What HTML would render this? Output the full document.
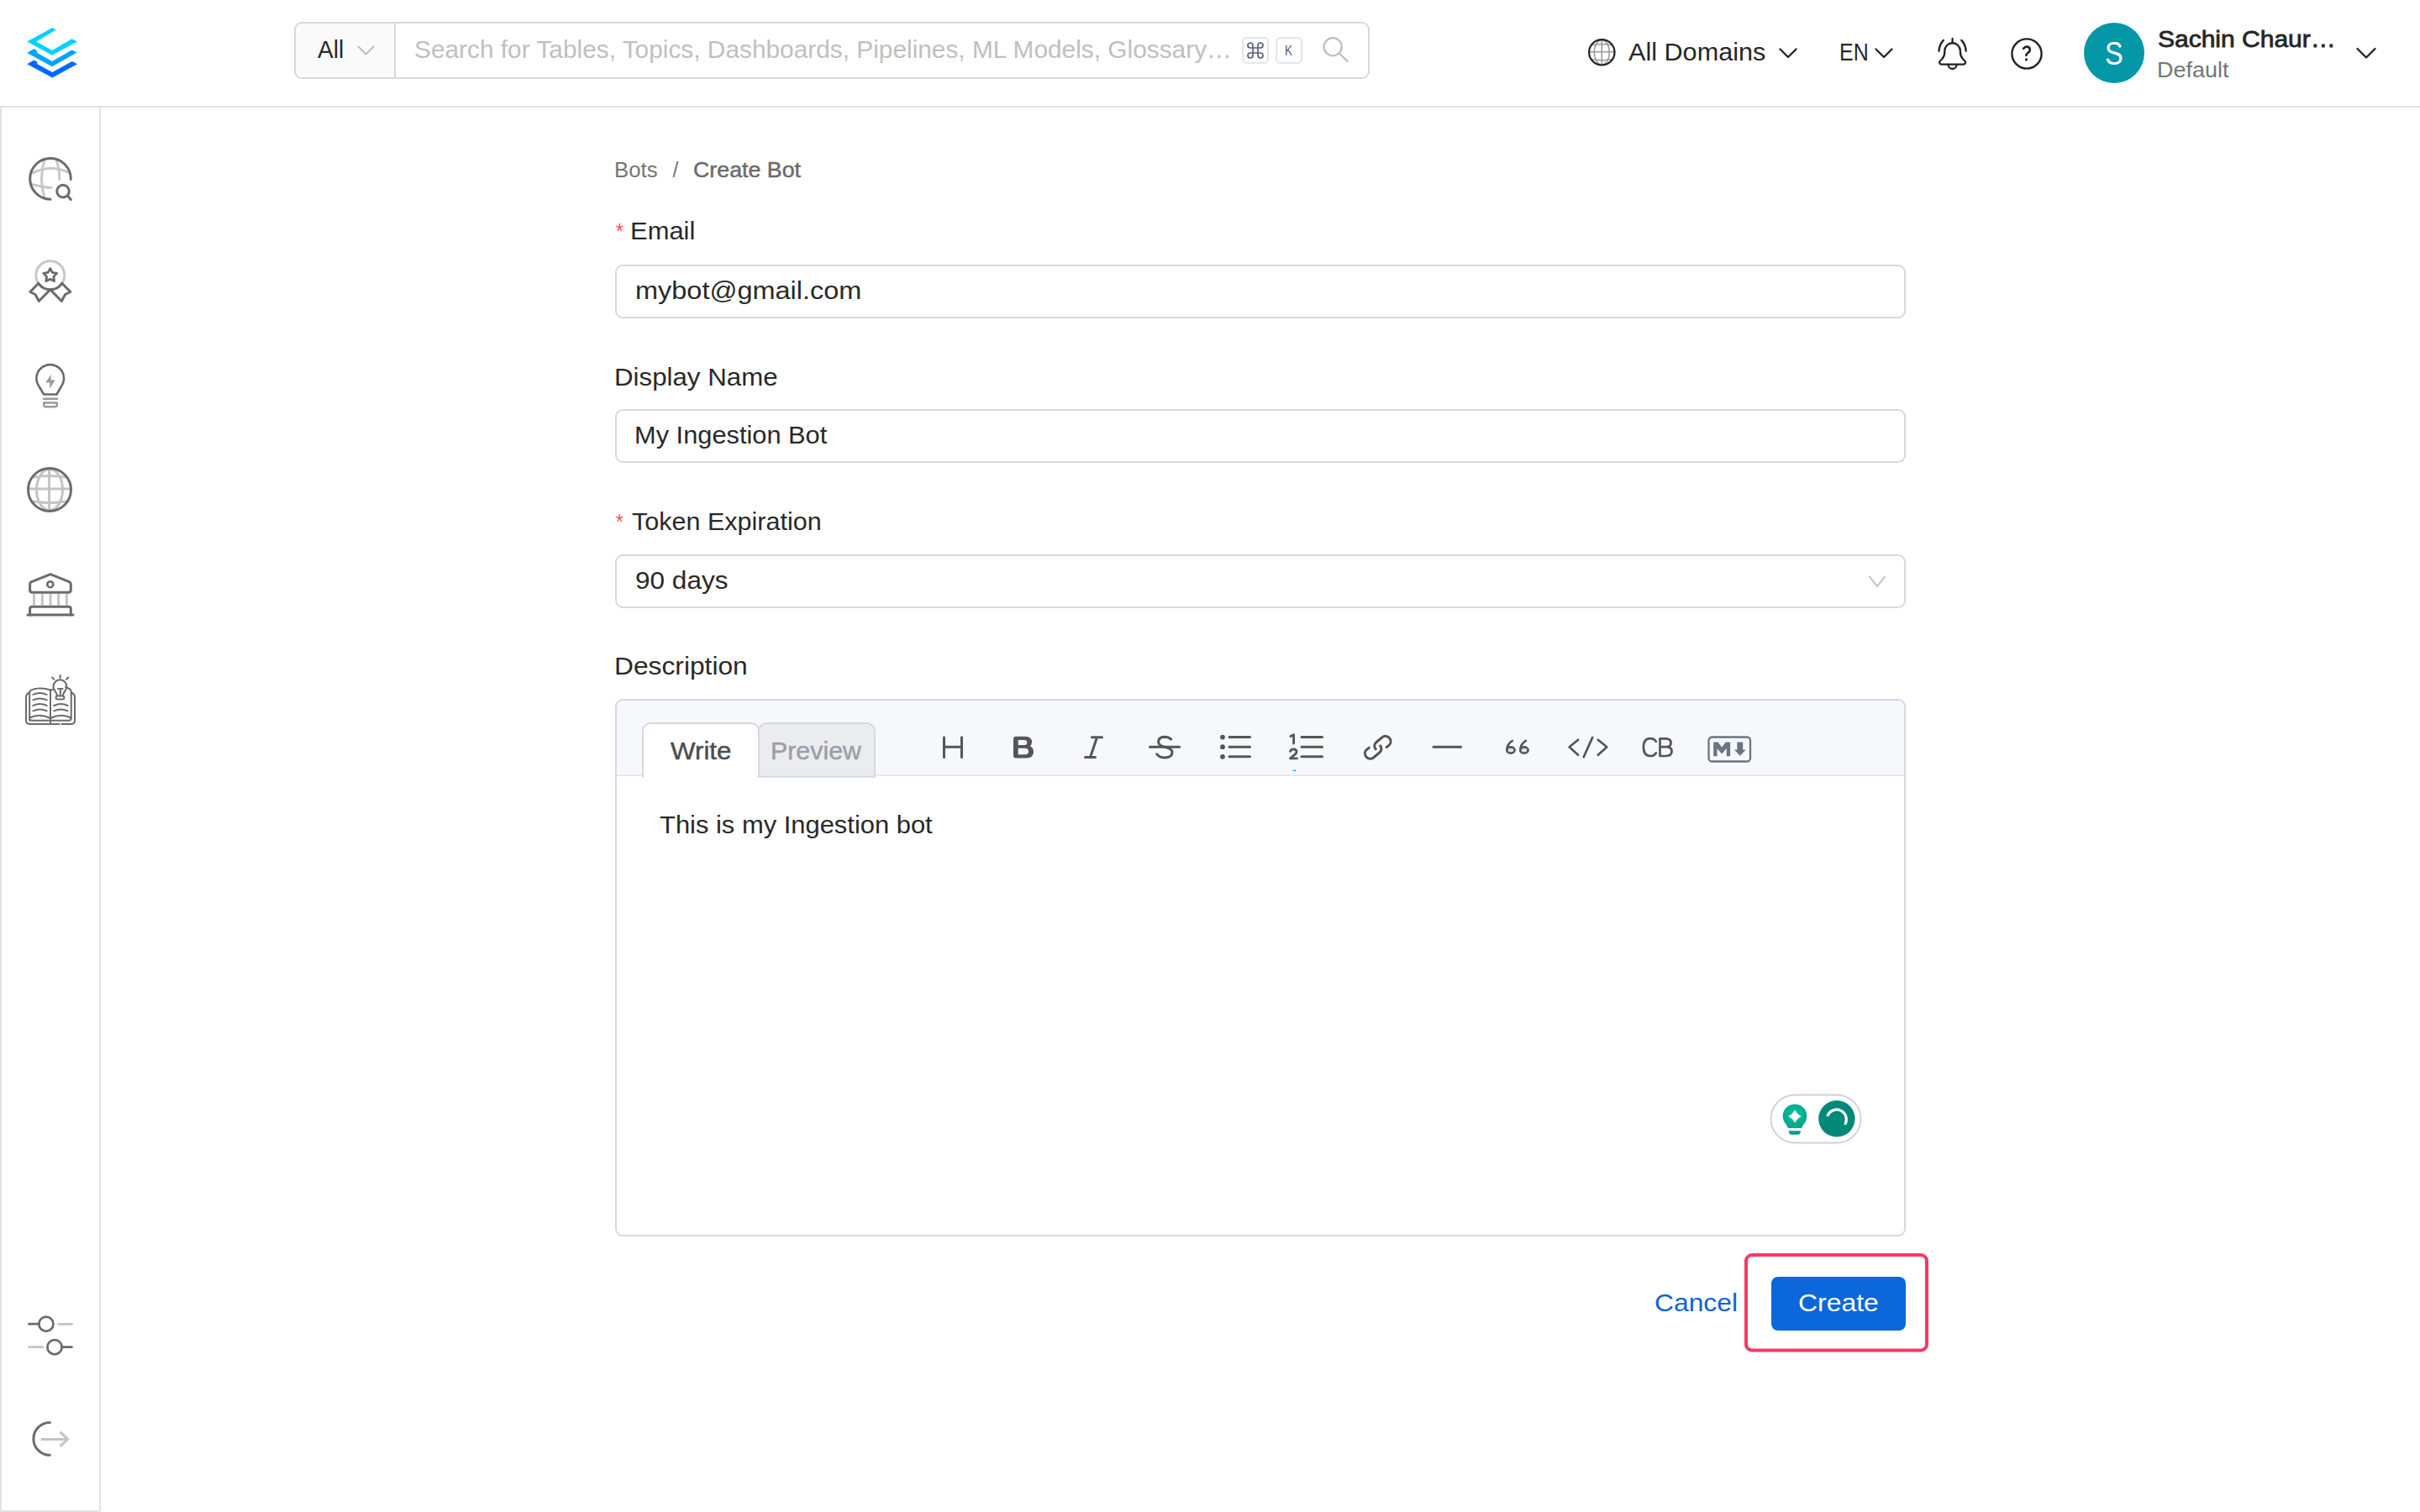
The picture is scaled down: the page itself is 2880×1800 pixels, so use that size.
<!DOCTYPE html>
<html><head><meta charset="utf-8"><title>Create Bot</title>
<style>
html,body{margin:0;padding:0;background:#fff;width:2880px;height:1800px;overflow:hidden}
body{position:relative;font-family:"Liberation Sans",sans-serif}
svg.bg{position:absolute;left:0;top:0}
.t{position:absolute;white-space:pre;transform-origin:0 0;font-family:"Liberation Sans",sans-serif}
</style></head><body>
<svg class="bg" width="2880" height="1800" viewBox="0 0 2880 1800" fill="none" stroke-linecap="round" stroke-linejoin="round">
<!-- header line -->
<rect x="0" y="126" width="2880" height="2" fill="#e2e2e2" stroke="none"/>
<!-- sidebar -->
<rect x="1" y="127" width="118" height="1672" stroke="#e2e2e2" stroke-width="2"/>
<!-- logo -->
<g stroke="none">
<polygon fill="#00d2ff" points="62.3,33.1 66.7,35.5 43.2,49.5 62,59.9 85.5,46.2 92,49.5 62,65.8 32.2,49.5"/>
<polygon fill="#00a3ff" points="40.5,58.1 44.7,60.8 43.5,62.6 62,73 85.5,59.6 91.7,62.6 62,79.2 32.2,62.9"/>
<polygon fill="#0068ff" points="40.5,71.5 45,74.2 43.5,75.7 62.3,86 85.8,73 92,76.2 62.3,92.6 32.2,76.2"/>
</g>
<!-- search box -->
<path d="M359,27 H470 V93 H359 A8,8 0 0 1 351,85 V35 A8,8 0 0 1 359,27 Z" fill="#fafafa" stroke="none"/>
<rect x="351" y="27" width="1278" height="66" rx="8" stroke="#d9d9d9" stroke-width="2"/>
<rect x="469" y="27" width="2" height="66" fill="#d9d9d9" stroke="none"/>
<polyline points="426,55 435.5,64.5 445,55" stroke="#bfbfbf" stroke-width="2" stroke-linecap="butt" stroke-linejoin="miter"/>
<rect x="1479.2" y="45.2" width="29.7" height="29.7" rx="4" stroke="#dde3ec" stroke-width="1.8"/>
<rect x="1519.2" y="45.2" width="29.7" height="29.7" rx="4" stroke="#dde3ec" stroke-width="1.8"/>
<!-- command symbol -->
<path d="M1491,57 V54 A3,3 0 1 0 1488,57 H1500 A3,3 0 1 0 1497,54 V66 A3,3 0 1 0 1500,63 H1488 A3,3 0 1 0 1491,66 Z" stroke="#5a6275" stroke-width="1.7"/>
<!-- search icon -->
<circle cx="1586.2" cy="55.8" r="10.6" stroke="#bfbfbf" stroke-width="2.3"/>
<line x1="1594.3" y1="64" x2="1603.6" y2="73" stroke="#bfbfbf" stroke-width="2.3"/>
<!-- header globe -->
<g stroke-width="1.6" stroke="#9a9a9a">
<line x1="1906.3" y1="47.5" x2="1906.3" y2="77"/>
<line x1="1891.5" y1="61.8" x2="1921" y2="61.8"/>
<path d="M1895,53.5 Q1906.3,51.5 1917.5,53.5"/>
<path d="M1895,70.8 Q1906.3,72.8 1917.5,70.8"/>
<ellipse cx="1906.3" cy="62.3" rx="9.1" ry="14.5"/>
</g>
<circle cx="1906.3" cy="62.3" r="15.2" stroke="#222" stroke-width="2.2"/>
<!-- chevrons -->
<polyline points="2118.5,58.5 2128,68 2137.5,58.5" stroke="#262626" stroke-width="2.4"/>
<polyline points="2232.5,58.5 2242,68 2251.5,58.5" stroke="#262626" stroke-width="2.4"/>
<polyline points="2805.5,58 2816,68.5 2826.5,58" stroke="#262626" stroke-width="2.4"/>
<!-- bell -->
<g stroke="#222" stroke-width="2.3">
<line x1="2323.6" y1="46" x2="2323.6" y2="50.8"/>
<path d="M2310.8,76.6 H2336.4 Q2339.8,76.4 2338.8,73.2 Q2338,71.8 2336,70.3 Q2333,67 2332.9,62 V60.5 A9.3,9.3 0 0 0 2314.3,60.5 V62 Q2314.2,67 2311.2,70.3 Q2309.2,71.8 2308.4,73.2 Q2307.4,76.4 2310.8,76.6 Z"/>
<path d="M2318.6,77 A5,5 0 0 0 2328.6,77"/>
<path d="M2312.9,47.9 Q2308,53 2307.5,60.8"/>
<path d="M2334.3,47.9 Q2339.2,53 2339.7,60.8"/>
</g>
<!-- help -->
<circle cx="2412" cy="64" r="17.6" stroke="#222" stroke-width="2.4"/>
<path d="M2408.1,57.9 Q2409.5,55.5 2412,55.6 Q2415.6,55.7 2415.8,58.8 Q2416,61.2 2413.6,62.7 Q2411.4,64.2 2411.4,66" stroke="#222" stroke-width="2.6"/>
<circle cx="2411.5" cy="70.9" r="1.6" fill="#222" stroke="none"/>
<!-- avatar -->
<circle cx="2516" cy="63" r="36" fill="#0497a8" stroke="none"/>

<!-- sidebar icons -->
<g stroke-width="3">
 <!-- explore -->
 <g stroke="#c8c8c8">
  <path d="M38.6,205.8 Q59.7,195.5 81.5,205"/>
  <path d="M38.6,219.8 Q49,222.5 60.6,223.6"/>
  <path d="M52.5,191.4 Q46.5,213 52.5,233.8"/>
  <path d="M67.4,191.4 Q71,203 70.8,213.4"/>
 </g>
 <path d="M84.3,213.4 A24.3,24.3 0 1 0 60,237.2" stroke="#6b6b6b"/>
 <circle cx="75" cy="227.6" r="7.3" stroke="#6b6b6b"/>
 <line x1="80.8" y1="233.6" x2="84.3" y2="237.6" stroke="#6b6b6b"/>
 <!-- medal -->
 <path d="M45.8,337.3 A17,17 0 1 1 73.8,337.3" stroke="#c8c8c8"/>
 <path d="M45.8,337.3 A17,17 0 0 0 73.8,337.3" stroke="#6b6b6b"/>
 <path d="M59.70,319.60 L62.29,324.34 L67.59,325.34 L63.88,329.26 L64.58,334.61 L59.70,332.30 L54.82,334.61 L55.52,329.26 L51.81,325.34 L57.11,324.34 Z" stroke="#6b6b6b" stroke-width="2.8"/>
 <path d="M45.8,337.3 L35.8,347.5 L42,350.5 L46.3,358.5 L59.3,345.3" stroke="#6b6b6b"/>
 <path d="M73.8,337.3 L83.8,347.5 L77.6,350.5 L73.3,358.5 L60.3,345.3" stroke="#6b6b6b"/>
 <!-- bulb -->
 <path d="M52.1,469.5 L46.5,460 A16.3,16.3 0 1 1 72.9,460 L67.5,469.5 Z" stroke="#6b6b6b" stroke-width="2.6"/>
 <polygon points="60.8,445.8 54.2,455.5 59.3,455.5 59.1,462.7 65.7,452.5 60.6,452.5" fill="#9a9a9a" stroke="none"/>
 <line x1="52" y1="474.8" x2="68" y2="474.8" stroke="#9a9a9a" stroke-width="2.6"/>
 <path d="M52.2,479.5 H67.8 V482 Q67.8,484.3 65.5,484.3 H54.5 Q52.2,484.3 52.2,482 Z" stroke="#9a9a9a" stroke-width="2.4"/>
 <!-- domain globe -->
 <g stroke="#c4c4c4">
  <line x1="58.6" y1="558.5" x2="58.6" y2="607.5"/>
  <line x1="34.5" y1="582" x2="83.5" y2="582"/>
  <path d="M40,568 Q59,565 78,568"/>
  <path d="M40,597 Q59,600 78,597"/>
  <ellipse cx="59" cy="583" rx="15.5" ry="24.5"/>
 </g>
 <circle cx="59" cy="583" r="25.5" stroke="#6b6b6b"/>
 <!-- bank -->
 <path d="M38.5,705.2 H81.4 Q84.3,705.2 84.3,702.3 V695.4 Q84.3,693.4 82.4,692.6 L60,683.6 L37.6,692.6 Q35.6,693.4 35.6,695.4 V702.3 Q35.6,705.2 38.5,705.2 Z" stroke="#6b6b6b"/>
 <circle cx="59.8" cy="695.7" r="3.5" stroke="#6b6b6b" stroke-width="2.6"/>
 <g stroke="#c4c4c4" stroke-linecap="butt"><line x1="40.5" y1="707" x2="40.5" y2="720.5"/><line x1="50.3" y1="707" x2="50.3" y2="720.5"/><line x1="60" y1="707" x2="60" y2="720.5"/><line x1="69.6" y1="707" x2="69.6" y2="720.5"/><line x1="79.4" y1="707" x2="79.4" y2="720.5"/></g>
 <path d="M35.6,732 V724.8 Q35.6,722.3 38.1,722.3 H81.8 Q84.3,722.3 84.3,724.8 V732" stroke="#6b6b6b"/>
 <line x1="33" y1="732" x2="87" y2="732" stroke="#6b6b6b"/>
 <!-- settings -->
 <g stroke-width="2.7">
 <circle cx="54.9" cy="1576.2" r="8.6" stroke="#6b6b6b"/>
 <line x1="34.5" y1="1576.2" x2="46.5" y2="1576.2" stroke="#6b6b6b"/>
 <line x1="69.8" y1="1576.4" x2="85.5" y2="1576.4" stroke="#c4c4c4"/>
 <circle cx="65" cy="1603.7" r="8.6" stroke="#6b6b6b"/>
 <line x1="34.5" y1="1603.7" x2="50.8" y2="1603.7" stroke="#c4c4c4"/>
 <line x1="73.5" y1="1603.7" x2="85.5" y2="1603.7" stroke="#6b6b6b"/>
 </g>
 <!-- logout -->
 <path d="M59.3,1693.5 A19.4,19.4 0 0 0 59.3,1732.3" stroke="#6b6b6b"/>
 <g stroke="#c4c4c4" stroke-linecap="butt" stroke-linejoin="miter"><line x1="48.7" y1="1713.6" x2="80.5" y2="1713.4"/><polyline points="71.6,1704.6 80.6,1713.3 71.6,1721.8"/></g>
</g>
<!-- book icon -->
<g stroke="#6b6b6b" stroke-width="2">
 <path d="M35.2,824.5 Q31,826 31,830 V857.8 Q31,861.9 35,861.9 H70.5 M73.5,861.9 H85 Q89,861.9 89,857.8 V830 Q89,826 84.7,824.5"/>
 <path d="M35.2,857.8 V823.5 Q36,821 44,819.8 M46,819.6 Q53,819 60,821.5 Q62.5,820.8 64.5,820.8 M78,818 Q84.7,820 84.7,823 V855 Q84.7,857.8 82,857.8 H38 Q35.2,857.8 35.2,855"/>
 <line x1="60" y1="821.5" x2="60" y2="861.9"/>
 <path d="M35.2,854.5 Q47,849 60,855 Q73,849 84.7,854.5"/>
 <path d="M39.3,826.8 Q47.5,823 55.7,826.8 M39.3,833.4 Q47.5,829.6 55.7,833.4 M39.3,840 Q47.5,836.2 55.7,840 M39.3,846.3 Q47.5,842.5 55.7,846.3 M64.2,840 Q72.4,836.2 80.6,840 M64.2,846.3 Q72.4,842.5 80.6,846.3"/>
 <path d="M68,827.5 L65.5,822.5 A7.9,7.9 0 1 1 77.3,822.5 L74.8,827.5" />
 <rect x="66.5" y="828.6" width="9.9" height="4" rx="2"/>
 <path d="M69,820 H74.6 M71.8,820 V827.5"/>
 <path d="M71.6,804 V807 M62.2,806.5 L64.2,808.7 M81.3,806.5 L79.1,808.7"/>
</g>

<!-- form inputs -->
<rect x="733" y="316" width="1534" height="62" rx="8" stroke="#d9d9d9" stroke-width="2" fill="#fff"/>
<rect x="733" y="488" width="1534" height="62" rx="8" stroke="#d9d9d9" stroke-width="2" fill="#fff"/>
<rect x="733" y="661" width="1534" height="62" rx="8" stroke="#d9d9d9" stroke-width="2" fill="#fff"/>
<polyline points="2224.5,686 2234,698 2243.5,686" stroke="#bfbfbf" stroke-width="1.9" stroke-linecap="butt" stroke-linejoin="miter"/>

<!-- editor -->
<path d="M733,924 V841 A8,8 0 0 1 741,833 H2259 A8,8 0 0 1 2267,841 V924 Z" fill="#f7f8fb" stroke="none"/>
<rect x="733" y="833" width="1534" height="638" rx="8" stroke="#d5d8e3" stroke-width="2"/>
<rect x="734" y="922" width="1532" height="2" fill="#e6e8ef" stroke="none"/>
<path d="M903,924.8 V870 A9,9 0 0 1 912,861 H1032 A9,9 0 0 1 1041,870 V924.8 Z" fill="#ebecf0" stroke="#d5d8e3" stroke-width="2"/>
<path d="M765,925 V870 A9,9 0 0 1 774,861 H894 A9,9 0 0 1 903,870 V924" fill="#fff" stroke="#d5d8e3" stroke-width="2"/>
<rect x="766" y="921" width="136" height="6" fill="#fff" stroke="none"/>

<!-- toolbar icons -->
<g stroke="#555" stroke-width="3">
 <path d="M1123.5,877.7 V901.6 M1144.5,877.7 V901.6 M1123.5,889.3 H1144.5"/>
 <path d="M1209,876.7 H1220 Q1228,876.7 1228,883.5 Q1228,886.5 1226,888.2 Q1230,890.5 1230,895 Q1230,902.5 1221,902.5 H1209 Q1206,902.5 1206,899.5 V879.7 Q1206,876.7 1209,876.7 Z M1211.7,880.9 V887 H1219.5 Q1222.3,887 1222.3,884 Q1222.3,880.9 1219.5,880.9 Z M1211.7,890.8 V898.3 H1220 Q1224,898.3 1224,894.5 Q1224,890.8 1220,890.8 Z" fill="#555" stroke="none" fill-rule="evenodd"/>
 <path d="M1299.5,877.7 H1311.5 M1291.5,901.6 H1303.5 M1305.5,877.7 L1297.5,901.6"/>
 <path d="M1368.5,889.2 H1403.5"/>
 <path d="M1393.6,880 Q1390.5,877.3 1386,877.3 Q1378.6,877.5 1378.6,883.3 Q1378.8,887.5 1386,889.2 Q1395,891 1395,895.5 Q1395,901.9 1386,901.9 Q1380,901.9 1376.8,897.8"/>
 <circle cx="1455" cy="877.6" r="1.8" fill="#555" stroke-width="2.2"/>
 <circle cx="1455" cy="889.2" r="1.8" fill="#555" stroke-width="2.2"/>
 <circle cx="1455" cy="900.8" r="1.8" fill="#555" stroke-width="2.2"/>
 <path d="M1463,877.6 H1487.5 M1463,889.2 H1487.5 M1463,900.8 H1487.5"/>
 <path d="M1549,877.6 H1573.5 M1549,889.2 H1573.5 M1549,900.8 H1573.5"/>
 <path d="M1535.8,876.5 L1539.6,874.8 V885" stroke-width="2.8"/>
 <path d="M1535.5,894.5 Q1536.5,891.9 1539.5,891.9 Q1543,891.9 1543,895 Q1543,897 1540,899 L1535.5,902.8 H1543.5" stroke-width="2.8"/>
 <path d="M1629.3,890.1 L1626,892.8 A6.3,6.3 0 0 0 1634.5,902 L1642,895.6 A5.5,5.5 0 0 0 1642.6,887.8" />
 <path d="M1650,889.6 L1653.5,886.8 A6.3,6.3 0 0 0 1645,877.6 L1637.5,884 A5.5,5.5 0 0 0 1637.2,891.8" />
 <path d="M1706,889.2 H1738.5"/>
 <path d="M1870,890 L1878,881 M1868,889.3 L1878,898.8" stroke-width="0"/>
 <polyline points="1878.1,880.7 1867.6,889.3 1878.1,898.8" stroke-width="2.7"/>
 <line x1="1895.2" y1="877.9" x2="1884.7" y2="901.2" stroke-width="2.7"/>
 <polyline points="1901.8,880.7 1912.3,889.3 1901.8,898.8" stroke-width="2.7"/>
 <path d="M1970.8,882.8 Q1968.5,879.2 1964,879.2 Q1955.9,879.2 1955.9,889.6 Q1955.9,900 1964,900 Q1968.5,900 1970.8,896.4" stroke-width="2.7"/>
 <path d="M1975.5,879.4 H1982.5 Q1988.5,879.4 1988.5,884.6 Q1988.5,889.2 1983,889.2 H1975.5 M1983,889.2 Q1989.5,889.2 1989.5,894.6 Q1989.5,900 1982.5,900 H1975.5 V879.4" stroke-width="2.7" stroke-linejoin="round"/>
</g>
<!-- quote 66 -->
<g stroke="#555" stroke-width="2.6">
 <ellipse cx="1797.9" cy="893" rx="4.7" ry="3.6" fill="#dde3ee"/>
 <path d="M1799.9,881.9 Q1793.8,885.5 1793.3,892.5"/>
 <ellipse cx="1813.9" cy="893" rx="4.7" ry="3.6" fill="#dde3ee"/>
 <path d="M1815.9,881.9 Q1809.8,885.5 1809.3,892.5"/>
</g>
<!-- markdown -->
<rect x="2033.5" y="877.5" width="49.5" height="29" rx="4" stroke="#6b7385" stroke-width="2.3"/>
<path d="M2039.2,900.2 V883.6 H2044.5 L2049.2,889.5 L2053.9,883.6 H2059.1 V900.2 H2054.8 V891 L2049.2,897.5 L2043.5,891 V900.2 Z" fill="#6b7385"/>
<path d="M2067.4,883.6 H2074.2 V892.6 H2077.7 L2070.8,899.8 L2063.9,892.6 H2067.4 Z" fill="#6b7385"/>
<!-- tiny blue marks -->
<path d="M1537,918 L1541,916.3 L1543,918 Z" fill="#29a3ff" stroke="none"/>

<!-- grammarly -->
<rect x="2107.5" y="1303.5" width="107" height="57" rx="28.5" fill="#fff" stroke="#cdd0dc" stroke-width="1.8"/>
<defs><radialGradient id="gb" cx="50%" cy="45%" r="60%"><stop offset="0" stop-color="#00c4a0"/><stop offset="1" stop-color="#00a488"/></radialGradient></defs>
<path d="M2128,1343 L2125.6,1338.6 A14.3,14.3 0 1 1 2146.4,1338.6 L2143.9,1343 Z" fill="url(#gb)"/>
<path d="M2128.5,1346.2 H2143.1 L2142.5,1348.5 Q2142,1350.7 2139.5,1350.7 H2132 Q2129.5,1350.7 2129,1348.5 Z" fill="#00a08a"/>
<path d="M2136,1321.5 Q2138.6,1326.4 2143.6,1329 Q2138.6,1331.6 2136,1336.5 Q2133.4,1331.6 2128.4,1329 Q2133.4,1326.4 2136,1321.5 Z" fill="#fff"/>
<circle cx="2185.9" cy="1331.8" r="21.7" fill="#03887a"/>
<path d="M2175.2,1327.6 A11.2,11.2 0 0 1 2196.2,1337.6" stroke="#fff" stroke-width="3.2" stroke-linecap="round"/>

<!-- highlight + button -->
<rect x="2078" y="1494" width="215" height="113.5" rx="7" stroke="#f93862" stroke-width="4"/>
<rect x="2108" y="1520" width="160" height="64" rx="8" fill="#0b67da"/>
</svg>

<span class="t" style="left:378.00px;top:44.00px;font-size:29.5px;line-height:29.5px;font-weight:400;color:#292929;transform:scaleX(0.9510)">All</span>
<span class="t" style="left:492.99px;top:44.00px;font-size:29.5px;line-height:29.5px;font-weight:400;color:#bfbfbf;transform:scaleX(1.0114)">Search for Tables, Topics, Dashboards, Pipelines, ML Models, Glossary…</span>
<span class="t" style="left:1938.00px;top:47.00px;font-size:29.5px;line-height:29.5px;font-weight:400;color:#262626;transform:scaleX(1.0375)">All Domains</span>
<span class="t" style="left:2189.31px;top:47.00px;font-size:29.5px;line-height:29.5px;font-weight:400;color:#262626;transform:scaleX(0.8452)">EN</span>
<span class="t" style="left:2505.17px;top:44.20px;font-size:39px;line-height:39px;font-weight:400;color:#ffffff;transform:scaleX(0.8333)">S</span>
<span class="t" style="left:2567.95px;top:32.00px;font-size:28.5px;line-height:28.5px;font-weight:400;color:#262626;transform:scaleX(1.0525);-webkit-text-stroke:0.8px #262626">Sachin Chaur…</span>
<span class="t" style="left:2567.34px;top:71.00px;font-size:25px;line-height:25px;font-weight:400;color:#757575;transform:scaleX(1.0807)">Default</span>
<span class="t" style="left:1529.20px;top:52.00px;font-size:17px;line-height:17px;font-weight:400;color:#5a6275;transform:scaleX(0.8000)">K</span>
<span class="t" style="left:730.94px;top:190.00px;font-size:25px;line-height:25px;font-weight:400;color:#757575;transform:scaleX(1.0310)">Bots</span>
<span class="t" style="left:800.50px;top:190.00px;font-size:25px;line-height:25px;font-weight:400;color:#757575">/</span>
<span class="t" style="left:824.53px;top:190.00px;font-size:25px;line-height:25px;font-weight:400;color:#6b6b6b;transform:scaleX(1.0712);-webkit-text-stroke:0.45px #6b6b6b">Create Bot</span>
<span class="t" style="left:733.00px;top:262.00px;font-size:26px;line-height:26px;font-weight:400;color:#ff4d4f;transform:scaleX(0.8600)">*</span>
<span class="t" style="left:749.90px;top:260.00px;font-size:29.5px;line-height:29.5px;font-weight:400;color:#292929;transform:scaleX(1.0483)">Email</span>
<span class="t" style="left:756.40px;top:331.00px;font-size:29.5px;line-height:29.5px;font-weight:400;color:#292929;transform:scaleX(1.1007)">mybot@gmail.com</span>
<span class="t" style="left:730.88px;top:434.00px;font-size:29.5px;line-height:29.5px;font-weight:400;color:#292929;transform:scaleX(1.0596)">Display Name</span>
<span class="t" style="left:754.91px;top:503.00px;font-size:29.5px;line-height:29.5px;font-weight:400;color:#292929;transform:scaleX(1.0435)">My Ingestion Bot</span>
<span class="t" style="left:733.00px;top:608.00px;font-size:26px;line-height:26px;font-weight:400;color:#ff4d4f;transform:scaleX(0.8600)">*</span>
<span class="t" style="left:751.70px;top:605.50px;font-size:29.5px;line-height:29.5px;font-weight:400;color:#292929;transform:scaleX(1.0351)">Token Expiration</span>
<span class="t" style="left:756.33px;top:676.00px;font-size:29.5px;line-height:29.5px;font-weight:400;color:#292929;transform:scaleX(1.0692)">90 days</span>
<span class="t" style="left:731.25px;top:778.00px;font-size:29.5px;line-height:29.5px;font-weight:400;color:#292929;transform:scaleX(1.0760)">Description</span>
<span class="t" style="left:798.00px;top:878.60px;font-size:29.5px;line-height:29.5px;font-weight:400;color:#4c4c4c;transform:scaleX(1.0606);-webkit-text-stroke:0.45px #4c4c4c">Write</span>
<span class="t" style="left:916.94px;top:878.60px;font-size:29.5px;line-height:29.5px;font-weight:400;color:#9a9ea8;transform:scaleX(1.0288);-webkit-text-stroke:0.45px #9a9ea8">Preview</span>
<span class="t" style="left:785.00px;top:967.00px;font-size:29.5px;line-height:29.5px;font-weight:400;color:#292929;transform:scaleX(1.0478)">This is my Ingestion bot</span>
<span class="t" style="left:1968.72px;top:1535.70px;font-size:29.5px;line-height:29.5px;font-weight:400;color:#0b62d9;transform:scaleX(1.0776)">Cancel</span>
<span class="t" style="left:2139.62px;top:1536.00px;font-size:29.5px;line-height:29.5px;font-weight:400;color:#ffffff;transform:scaleX(1.0822)">Create</span>
</body></html>
